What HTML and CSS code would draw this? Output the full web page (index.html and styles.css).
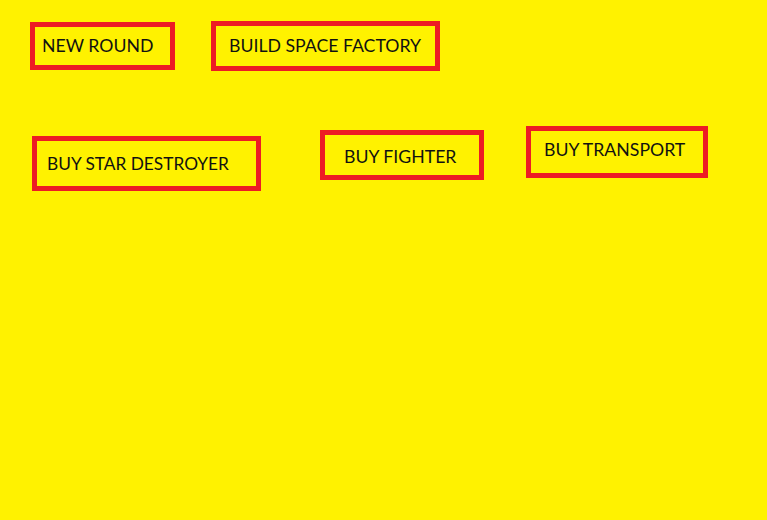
FILE: index.html
```html
<!DOCTYPE html>
<html>
<head>
<meta charset="utf-8">
<link rel="stylesheet" href="styles.css">
</head>
<body>
<div class="canvas">
  <div class="row row-top">
    <div class="box box-round"><span class="label">NEW ROUND</span></div>
    <div class="box box-factory"><span class="label">BUILD SPACE FACTORY</span></div>
  </div>
  <div class="row row-buy">
    <div class="box box-destroyer"><span class="label">BUY STAR DESTROYER</span></div>
    <div class="box box-fighter"><span class="label">BUY FIGHTER</span></div>
    <div class="box box-transport"><span class="label">BUY TRANSPORT</span></div>
  </div>
</div>
</body>
</html>
```
FILE: styles.css
```css
html, body {
  margin: 0;
  padding: 0;
  background: #fff200;
}
.canvas {
  width: 767px;
  height: 520px;
  overflow: hidden;
  background: #fff200;
  font-family: Lato, "Liberation Sans", sans-serif;
  font-size: 17.7px;
  color: #111;
}
.row {
  display: flex;
  align-items: flex-start;
}
.row-top {
  padding: 21px 0 0 30px;
}
.row-buy {
  padding: 55px 0 0 32px;
}
.box {
  box-sizing: border-box;
  border: 5px solid #ed1c24;
  display: flex;
  align-items: center;
  white-space: nowrap;
}
.label {
  display: block;
  line-height: 1;
}
.box-round {
  width: 145px;
  height: 48px;
  margin-top: 1px;
  padding-left: 7px;
  padding-bottom: 1px;
}
.box-factory {
  width: 229px;
  height: 50px;
  margin-left: 36px;
  padding-left: 13px;
  padding-bottom: 1px;
}
.box-destroyer {
  width: 229px;
  height: 55px;
  margin-top: 10px;
  padding-left: 10px;
  font-size: 17.3px;
}
.box-fighter {
  width: 164px;
  height: 50px;
  margin-top: 4px;
  margin-left: 59px;
  padding-left: 19px;
  padding-top: 3px;
}
.box-transport {
  width: 182px;
  height: 52px;
  margin-left: 42px;
  padding-left: 13px;
  padding-bottom: 4px;
}
```
